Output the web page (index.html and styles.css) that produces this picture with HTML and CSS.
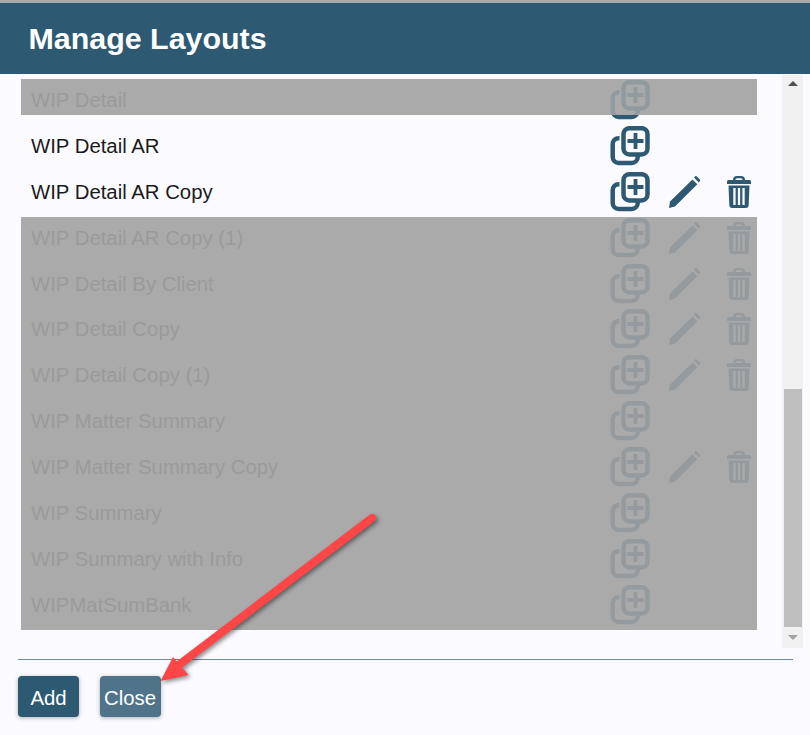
FILE: index.html
```html
<!DOCTYPE html>
<html lang="en">
<head>
<meta charset="utf-8">
<title>Manage Layouts</title>
<link rel="stylesheet" href="styles.css">
</head>
<body>
<svg class="defs" width="0" height="0" aria-hidden="true">
  <symbol id="i-copy" viewBox="0 0 40 40">
    <rect x="13.500" y="2.200" width="24" height="26.300" rx="6" fill="none" stroke="currentColor" stroke-width="4.500"/>
    <path d="M25.500 7v16M17.500 15h16" fill="none" stroke="currentColor" stroke-width="3.800"/>
    <path d="M9.500 12.200H8.700a6 6 0 0 0-6 6V31a6 6 0 0 0 6 6h13a6 6 0 0 0 6-6v-1" fill="none" stroke="currentColor" stroke-width="4.500"/>
  </symbol>
  <symbol id="i-pencil" viewBox="0 0 32 32">
    <path d="M0 32l1-6.500L23.500 3.500l4.800 4.800L6 30.500z" fill="currentColor"/>
    <path d="M25 1.500l1.200-1.200a1 1 0 0 1 1.300 0l3.500 3.500a1 1 0 0 1 0 1.300l-1.300 1.400z" fill="currentColor"/>
  </symbol>
  <symbol id="i-trash" viewBox="0 0 24 32">
    <path fill-rule="evenodd" fill="currentColor" d="M6 4V4a4 4 0 0 1 4-4h4a4 4 0 0 1 4 4v0h4.500a1.500 1.500 0 0 1 1.500 1.500V8H0V5.500A1.500 1.500 0 0 1 1.500 4zM8.300 4h7.400a2 2 0 0 0-2-1.800h-3.400a2 2 0 0 0-2 1.800zM1.500 9.500h21l-.8 19.500a3 3 0 0 1-3 3H5.300a3 3 0 0 1-3-3zM6.300 12v17h2.300V12zM10.850 12v17h2.300V12zM15.400 12v17h2.300V12z"/>
  </symbol>
</svg>

<div class="topstrip"></div>
<header class="header"><h1 class="title">Manage Layouts</h1></header>

<main class="body">
  <div class="list">
    <div class="row row-first masked">
      <span class="name">WIP Detail</span>
      <svg class="ic ic-copy"><use href="#i-copy"/></svg>
    </div>
    <div class="row">
      <span class="name">WIP Detail AR</span>
      <svg class="ic ic-copy"><use href="#i-copy"/></svg>
    </div>
    <div class="row">
      <span class="name">WIP Detail AR Copy</span>
      <svg class="ic ic-copy"><use href="#i-copy"/></svg>
      <svg class="ic ic-pencil"><use href="#i-pencil"/></svg>
      <svg class="ic ic-trash"><use href="#i-trash"/></svg>
    </div>
    <div class="group masked">
      <div class="row">
        <span class="name">WIP Detail AR Copy (1)</span>
        <svg class="ic ic-copy"><use href="#i-copy"/></svg>
        <svg class="ic ic-pencil"><use href="#i-pencil"/></svg>
        <svg class="ic ic-trash"><use href="#i-trash"/></svg>
      </div>
      <div class="row">
        <span class="name">WIP Detail By Client</span>
        <svg class="ic ic-copy"><use href="#i-copy"/></svg>
        <svg class="ic ic-pencil"><use href="#i-pencil"/></svg>
        <svg class="ic ic-trash"><use href="#i-trash"/></svg>
      </div>
      <div class="row">
        <span class="name">WIP Detail Copy</span>
        <svg class="ic ic-copy"><use href="#i-copy"/></svg>
        <svg class="ic ic-pencil"><use href="#i-pencil"/></svg>
        <svg class="ic ic-trash"><use href="#i-trash"/></svg>
      </div>
      <div class="row">
        <span class="name">WIP Detail Copy (1)</span>
        <svg class="ic ic-copy"><use href="#i-copy"/></svg>
        <svg class="ic ic-pencil"><use href="#i-pencil"/></svg>
        <svg class="ic ic-trash"><use href="#i-trash"/></svg>
      </div>
      <div class="row">
        <span class="name">WIP Matter Summary</span>
        <svg class="ic ic-copy"><use href="#i-copy"/></svg>
      </div>
      <div class="row">
        <span class="name">WIP Matter Summary Copy</span>
        <svg class="ic ic-copy"><use href="#i-copy"/></svg>
        <svg class="ic ic-pencil"><use href="#i-pencil"/></svg>
        <svg class="ic ic-trash"><use href="#i-trash"/></svg>
      </div>
      <div class="row">
        <span class="name">WIP Summary</span>
        <svg class="ic ic-copy"><use href="#i-copy"/></svg>
      </div>
      <div class="row">
        <span class="name">WIP Summary with Info</span>
        <svg class="ic ic-copy"><use href="#i-copy"/></svg>
      </div>
      <div class="row">
        <span class="name">WIPMatSumBank</span>
        <svg class="ic ic-copy"><use href="#i-copy"/></svg>
      </div>
    </div>
  </div>
  <div class="scrollbar">
    <div class="sb-btn"><span class="tri-up"></span></div>
    <div class="sb-space"></div>
    <div class="sb-thumb"></div>
    <div class="sb-btn sb-btn-end"><span class="tri-down"></span></div>
  </div>
</main>

<footer class="footer">
  <div class="divider"></div>
  <div class="actions">
    <button class="btn btn-add" type="button">Add</button>
    <button class="btn btn-close" type="button">Close</button>
  </div>
</footer>

<svg class="arrow" width="810" height="735" viewBox="0 0 810 735" aria-hidden="true">
  <path d="M372 518L180 664" fill="none" stroke="#ff4646" stroke-width="8" stroke-linecap="round"/>
  <path d="M160.500 681L173 657L188.500 675z" fill="#ff4646"/>
</svg>
</body>
</html>
```
FILE: styles.css
```css
* { box-sizing: border-box; }
html, body { margin: 0; padding: 0; }
body {
  position: relative;
  width: 810px;
  height: 735px;
  overflow: hidden;
  background: #fbfbff;
  font-family: "Liberation Sans", Arial, sans-serif;
  color: #1a1a1a;
}
.defs { position: absolute; }
.topstrip { height: 3px; background: #a9a9a9; }
.header {
  height: 71px;
  background: #2d5a72;
  display: flex;
  align-items: center;
  padding-left: 28.5px;
}
.title {
  margin: 0 0 1px;
  font-size: 30.4px;
  font-weight: 700;
  color: #fff;
}
.body {
  display: flex;
  height: 574px;
  padding-left: 21px;
}
.list {
  width: 736px;
  margin-right: 25px;
  padding-top: 3px;
  overflow: hidden;
  flex: none;
}
.row {
  height: 45.9px;
  display: grid;
  grid-template-columns: 1fr 40px 51px 50px;
  align-items: center;
  padding: 0 6px 0 10px;
}
.name { grid-column: 1; font-size: 20.35px; line-height: 24px; }
.ic { color: #2d5a72; display: block; }
.ic-copy { grid-column: 2; width: 40px; height: 40px; }
.ic-pencil { grid-column: 3; width: 32px; height: 32px; justify-self: end; }
.ic-trash { grid-column: 4; width: 24px; height: 32px; justify-self: end; }

/* dimmed rows: dark content under a translucent grey sheet */
.masked { position: relative; color: #5a5a5a; }
.masked .ic { color: #3f5c6a; }
.masked::after {
  content: "";
  position: absolute;
  left: 0;
  right: 0;
  background: rgba(170, 170, 170, 0.8);
}
.row-first {
  background: linear-gradient(#aaa, #aaa) no-repeat 0 2px / 100% 36px;
}
.row-first::after { top: 2px; height: 36px; }
.row-first .ic { color: #2d5a72; }
.group {
  padding-bottom: 2.5px;
  background: linear-gradient(#aaa, #aaa) no-repeat 0 2px;
}
.group::after { top: 2px; bottom: 0; }

.scrollbar {
  width: 21px;
  flex: none;
  background: #f1f1f1;
  margin-top: 1px;
  display: flex;
  flex-direction: column;
  align-items: stretch;
}
.sb-btn { height: 17px; display: flex; align-items: center; justify-content: center; }
.sb-btn-end { height: 21px; }
.sb-space { flex: 1; }
.sb-thumb { height: 238px; margin: 0 1px 0 2px; background: #bebebe; }
.tri-up, .tri-down {
  width: 0;
  height: 0;
  border-left: 5px solid transparent;
  border-right: 5px solid transparent;
}
.tri-up { border-bottom: 5px solid #505050; }
.tri-down { border-top: 5px solid #a3a3a3; }

.footer { padding: 11px 17px 0 18px; }
.divider { height: 1px; background: #6f8ba0; }
.actions { display: flex; gap: 20.5px; margin-top: 16px; }
.btn {
  width: 61px;
  height: 41px;
  padding: 3px 0 0;
  border: 0;
  border-radius: 4px;
  color: #fff;
  font-family: inherit;
  font-size: 20.35px;
  box-shadow: 0 1px 4px rgba(0, 0, 0, 0.3);
}
.btn-add { background: #2d5a72; }
.btn-close { background: #4f748a; }

.arrow {
  position: absolute;
  left: 0;
  top: 0;
  pointer-events: none;
  filter: drop-shadow(2px 2px 2px rgba(0, 0, 0, 0.45));
}
```
